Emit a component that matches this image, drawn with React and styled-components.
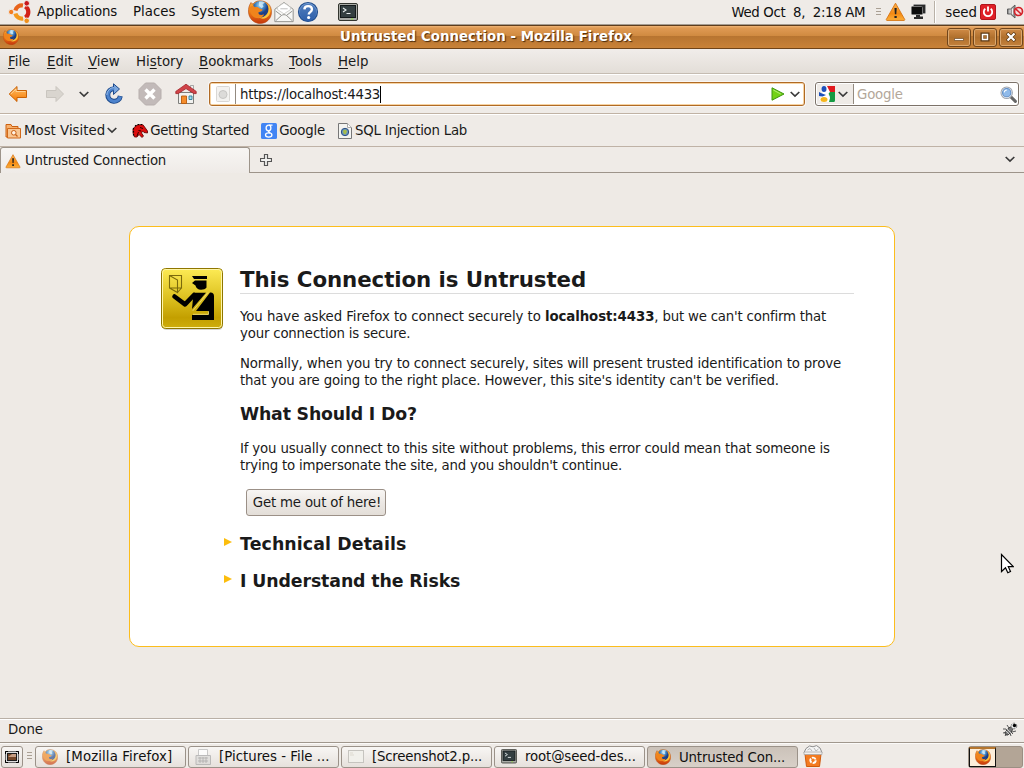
import React from 'react';
import styled, { createGlobalStyle } from 'styled-components';

const Global = createGlobalStyle`
  * { box-sizing: border-box; }
  html, body { margin: 0; padding: 0; overflow: hidden; }
  body { background: #efebe7; }
  h1, h2, p { margin: 0; }
  svg { display: block; flex: none; }
`;

const Desktop = styled.div`
  position: relative;
  width: 1024px;
  height: 768px;
  display: flex;
  flex-direction: column;
  background: #efebe7;
  color: #1a1a1a;
  font-family: "DejaVu Sans", sans-serif;
  font-size: 13.33px;
  line-height: 17px;
  white-space: nowrap;
  overflow: hidden;
`;

const Label = styled.span`
  flex: none;
  width: ${p => (p.$w ? `${p.$w}px` : 'auto')};
  margin-left: ${p => p.$ml || 0}px;
  padding-top: ${p => p.$pt || 0}px;
  letter-spacing: ${p => p.$ls || 0}px;
  color: ${p => p.$color || 'inherit'};
  white-space: pre;
`;

const Icon = styled.svg.attrs(p => ({ width: p.$s, height: p.$h || p.$s, viewBox: p.$vb || '0 0 24 24' }))`
  margin-left: ${p => p.$ml || 0}px;
  opacity: ${p => p.$o || 1};
`;

const TopPanel = styled.header`
  height: 25px;
  flex: none;
  display: flex;
  align-items: center;
  padding: 0 0 1px 8px;
  border-bottom: 1px solid #a49c92;
  color: #101010;
`;
const Spacer = styled.div`flex: 1;`;
const Separator = styled.div`
  width: 2px;
  height: 22px;
  margin-left: 8px;
  border-left: 1px solid #b9b1a7;
  border-right: 1px solid #fff;
`;
const Grip = styled.div`
  width: 5px;
  height: 8px;
  margin-left: ${p => p.$ml}px;
  background: repeating-linear-gradient(#aaa094 0 1px, transparent 1px 3px);
`;

const TitleBar = styled.div`
  height: 24px;
  flex: none;
  display: flex;
  align-items: center;
  padding: 0 1px 0 3px;
  border-top: 1px solid #5f3d1c;
  border-bottom: 1px solid #6f4419;
  background: linear-gradient(#efb578 0, #df9a54 2px, #d08a40 10px, #b77430 10px, #c98238 100%);
`;
const WindowTitle = styled.div`
  flex: 1;
  padding: 0 0 2px 8px;
  text-align: center;
  font-weight: bold;
  color: #fff;
  letter-spacing: 0.05px;
  text-shadow: 1px 1px 1px #4a2b0c;
`;
const WindowButton = styled.div`
  width: 24px;
  height: 19px;
  margin-left: 2px;
  display: flex;
  align-items: center;
  justify-content: center;
  border: 1px solid #70451b;
  border-radius: 3px;
  box-shadow: inset 0 0 0 1px #dba86f;
  background: linear-gradient(#d08b47, #b0702d 50%, #c4813c);
`;

const MenuBar = styled.nav`
  height: 25px;
  flex: none;
  display: flex;
  align-items: center;
  padding: 1px 0 0 8px;
  background: linear-gradient(#f1edea, #e3ded8);
  border-bottom: 1px solid #c5bcb2;
`;
const Key = styled.u`
  text-underline-offset: 2px;
  text-decoration-thickness: 1px;
`;

const NavBar = styled.div`
  height: 40px;
  flex: none;
  display: flex;
  align-items: center;
  padding-left: 8px;
  border-top: 1px solid #fff;
  border-bottom: 1px solid #c0b2a4;
`;
const Field = styled.div`
  width: ${p => p.$w}px;
  height: 24px;
  margin-left: ${p => p.$ml}px;
  display: flex;
  align-items: center;
  background: #fff;
  border: 1px solid ${p => p.$edge};
  border-radius: 3px;
  box-shadow: inset 0 0 0 1px ${p => p.$glow}, 0 0 0 1px #f9f7f5;
  overflow: hidden;
`;
const FieldStart = styled.div`
  width: ${p => p.$w}px;
  height: 20px;
  margin-left: 1px;
  display: flex;
  align-items: center;
  background: ${p => p.$bg || '#fff'};
  border-right: 1px solid #938a80;
`;
const FieldEnd = styled.div`
  padding-right: ${p => p.$pr}px;
  display: flex;
  align-items: center;
`;
const Caret = styled.div`
  width: 1px;
  height: 17px;
  background: #000;
`;

const BookmarkBar = styled.div`
  height: 33px;
  flex: none;
  display: flex;
  align-items: center;
  padding-left: 5px;
  border-top: 1px solid #fff;
  border-bottom: 1px solid #bfb2a6;
`;

const TabStrip = styled.div`
  height: 26px;
  flex: none;
  display: flex;
  background: linear-gradient(#9d948a, #9d948a) bottom / 100% 1px no-repeat;
`;
const Tab = styled.div`
  width: 250px;
  display: flex;
  align-items: center;
  padding-left: 4px;
  border: 1px solid #9d948a;
  border-bottom: 0;
  border-radius: 3px 3px 0 0;
  background: linear-gradient(#f7f5f3, #efebe7);
`;
const TabTools = styled.div`
  flex: 1;
  display: flex;
  align-items: center;
  padding: 0 9px 1px 10px;
`;

const Page = styled.main`
  flex: 1;
  min-height: 0;
  padding: 53px 129px 0;
  background: #eeeae5;
`;
const ErrorCard = styled.section`
  width: 766px;
  height: 421px;
  display: flex;
  padding: 41px 40px 0 31px;
  background: #fff;
  border: 1px solid #fcbd1c;
  border-radius: 10px;
`;
const ErrorText = styled.div`
  flex: none;
  width: 614px;
  margin-left: 16px;
`;
const Heading = styled.h1`
  height: 27px;
  margin-top: -1px;
  font-size: 21.33px;
  line-height: 25px;
  letter-spacing: -0.07px;
  border-bottom: 1px solid #dcdcdc;
`;
const SubHeading = styled.h2`
  position: relative;
  margin-top: ${p => p.$mt}px;
  font-size: 17.33px;
  line-height: 21px;
  letter-spacing: ${p => p.$ls || 0}px;
`;
const Para = styled.p`
  margin-top: ${p => p.$mt}px;
`;
const Line = styled.span`
  display: block;
  letter-spacing: ${p => p.$ls || 0}px;
`;
const Run = styled.span`
  letter-spacing: ${p => p.$ls}px;
`;
const Strong = styled.b`
  letter-spacing: -0.08px;
`;
const EscapeButton = styled.button`
  display: block;
  width: 140px;
  height: 27px;
  margin: 15px 0 0 6px;
  padding: 0 0 0 2px;
  font: inherit;
  color: inherit;
  border: 1px solid #9b9087;
  border-radius: 3px;
  background: linear-gradient(#f8f6f4, #ece8e4 50%, #e3ded8);
  letter-spacing: -0.19px;
`;
const Twisty = styled.i`
  position: absolute;
  left: -16px;
  top: 4px;
  border-left: 8px solid #fcbd0c;
  border-top: 4px solid transparent;
  border-bottom: 4px solid transparent;
`;

const StatusBar = styled.div`
  height: 24px;
  flex: none;
  display: flex;
  align-items: center;
  padding: 0 6px 2px 8px;
  border-top: 1px solid #b9b0a6;
  box-shadow: inset 0 1px #fff;
`;
const TaskBar = styled.footer`
  height: 26px;
  flex: none;
  display: flex;
  align-items: center;
  padding: 0 1px 0 1px;
  border-top: 1px solid #a0978d;
  box-shadow: inset 0 1px #fbfaf9;
  color: #101010;
`;
const Task = styled.div`
  width: ${p => p.$w}px;
  height: 22px;
  margin: 2px 0 0 ${p => p.$ml}px;
  display: flex;
  align-items: center;
  padding-left: ${p => p.$pl}px;
  padding-top: ${p => (p.$active ? 1 : 0)}px;
  border: 1px solid #9b9289;
  border-radius: 3px;
  background: ${p => (p.$active ? 'linear-gradient(#cbc2b9, #d8d0c8)' : 'linear-gradient(#f8f6f4, #e6e1dc)')};
`;
const Pager = styled.div`
  width: 55px;
  height: 22px;
  margin-top: 2px;
  display: flex;
  background: #b3a596;
  border: 1px solid #9b8f83;
  border-radius: 3px;
`;
const Workspace = styled.div`
  width: 27px;
  height: 20px;
  display: flex;
  align-items: center;
  justify-content: center;
  border: 1px solid #111;
  border-top: 2px solid #b5762f;
  background: #fdeeda;
`;
const Pointer = styled.div`
  position: absolute;
  left: 1000px;
  top: 553px;
`;
const Defs = styled.svg`
  position: absolute;
`;

const Gradients = () => (
  <Defs width="0" height="0">
    <defs>
      <radialGradient id="globe" cx=".45" cy=".25"><stop offset="0" stopColor="#b4def2" /><stop offset=".5" stopColor="#4a90cc" /><stop offset="1" stopColor="#1c3f86" /></radialGradient>
      <linearGradient id="fox" x1="0" y1="0" x2="0" y2="1"><stop offset="0" stopColor="#f9ae33" /><stop offset=".5" stopColor="#ee7a17" /><stop offset="1" stopColor="#c5360c" /></linearGradient>
      <linearGradient id="warn" x1="0" y1="0" x2="0" y2="1"><stop offset="0" stopColor="#fdb251" /><stop offset=".6" stopColor="#f58a12" /><stop offset="1" stopColor="#fbb03c" /></linearGradient>
      <linearGradient id="gold" x1="0" y1="0" x2="0" y2="1"><stop offset="0" stopColor="#fdeb55" /><stop offset=".5" stopColor="#dcc01f" /><stop offset=".82" stopColor="#c39f00" /><stop offset="1" stopColor="#cfae0c" /></linearGradient>
      <linearGradient id="orange" x1="0" y1="0" x2="0" y2="1"><stop offset="0" stopColor="#ffc06b" /><stop offset="1" stopColor="#f57900" /></linearGradient>
      <linearGradient id="blue" x1="0" y1="0" x2="0" y2="1"><stop offset="0" stopColor="#8db4e4" /><stop offset="1" stopColor="#2a5fb0" /></linearGradient>
    </defs>
  </Defs>
);

const Firefox = p => (
  <Icon {...p}>
    <path d="M3 2.500C1 5.500.3 8.500.5 12 .8 18.500 6 23.500 12.200 23.500c6.300 0 11.300-5 11.300-11.300 0-3.200-1-6.200-3-8.200C18 1.800 15 .8 12 .8 9 .8 6.500 2 5 4 4 3.800 3.400 3.300 3 2.500z" fill="url(#fox)" stroke="#b5480f" strokeWidth=".6" />
    <path d="M5.500 4.500C7.500 1.800 10 1 12.500 1c4 0 7.500 3 8 7.500.3 5-3 8.800-7.500 9-4.500 0-7.500-3-8-7z" fill="url(#globe)" />
    <path d="M11 1.800c2-.6 4.500-.2 6 1l-2.500 1.400 1 2.500-2 1.600-2.500-2.500z" fill="#d4edf7" opacity=".8" />
    <path d="M2 7.500C3.500 5.500 5.500 5.500 7 7.200c2-.5 3.500 0 4.500 1.300l3 1c0 1.600-2 2.200-4 2.800-.4 2.700 2.500 3.500 5.500 2-.6 3-4 4.300-7.500 3.700C4 17.500 1.500 13 2 7.500z" fill="#f0841c" />
    <path d="M19.500 3.800c1.700 3.200 1.800 7.200-.5 10.200-2 2.700-5 3.800-8 3.600 3.500 2.200 8 1 10.200-2.600 2.200-3.800 1.600-8.600-1.700-11.200z" fill="#fcc43c" />
  </Icon>
);

const Warning = p => (
  <Icon {...p}>
    <path d="M12 2.500 22.500 21a.8.8 0 0 1-.7 1.200H2.200A.8.8 0 0 1 1.500 21z" fill="url(#warn)" stroke="#d5710d" strokeWidth="1" strokeLinejoin="round" />
    <path d="M10.800 8h2.600l-.5 7h-1.600zM10.800 17h2.600v2.400h-2.600z" fill="#222" />
  </Icon>
);

const Ubuntu = () => (
  <Icon $s={24}>
    <g fill="none" strokeWidth="4.200">
      <path d="M7.400 10.500A6.600 6.600 0 0 1 15 5.500" stroke="#e8641b" />
      <path d="M17.300 6.500A6.600 6.600 0 0 1 17.300 17.600" stroke="#d32219" />
      <path d="M15.200 18.500A6.600 6.600 0 0 1 7.400 13.500" stroke="#f39a1c" />
    </g>
    <g stroke="#efebe7" strokeWidth="1">
      <circle cx="3.200" cy="12" r="2.700" fill="#f47d20" />
      <circle cx="18.700" cy="3.300" r="2.800" fill="#c8171d" />
      <circle cx="18.700" cy="20.800" r="2.800" fill="#f0901c" />
    </g>
  </Icon>
);

const Mail = () => (
  <Icon $s={22} $ml={1}>
    <path d="M2 9 12 1.500 22 9v13.500H2z" fill="#f7f7f5" stroke="#8b8b88" />
    <path d="M5 9.500V6.800l7-4.800 7 4.800v2.700L12 14z" fill="#fff" stroke="#c2c2bf" strokeWidth=".8" />
    <path d="m3 11 6 4.500M21 11l-6 4.500M3 21.500 9 16c2-1.500 4-1.500 6 0l6 5.500" fill="none" stroke="#8b8b88" />
    <path d="M8 8.500h8" stroke="#bbb" />
  </Icon>
);

const Help = () => (
  <Icon $s={22} $ml={2}>
    <circle cx="12" cy="12" r="10.400" fill="url(#blue)" stroke="#24508f" strokeWidth="1.200" />
    <circle cx="12" cy="12" r="9" fill="#2f5da5" opacity=".6" />
    <path d="M8 9.200C8.200 6.700 9.800 5.600 12.100 5.600c2.600 0 4.200 1.500 4.200 3.500 0 3-3.500 3-3.500 5.600" fill="none" stroke="#fff" strokeWidth="2.600" />
    <circle cx="12.700" cy="18" r="1.700" fill="#fff" />
  </Icon>
);

const Terminal = p => (
  <Icon $vb="0 0 20 18" $h={p.$s * 0.9} {...p}>
    <rect x=".5" y=".5" width="19" height="17" rx="1.500" fill="#a9aba6" stroke="#33352f" />
    <rect x="2.500" y="2.500" width="15" height="12" fill="#343f41" stroke="#141a1b" />
    <path d="m5 5 3 2-3 2M8.500 10.500h4" fill="none" stroke="#e9efef" strokeWidth="1.100" />
    <path d="M13 16h2" stroke="#8ae234" />
  </Icon>
);

const Network = () => (
  <Icon $s={16} $ml={4} $vb="0 0 16 16">
    <rect x="3.500" y=".5" width="12" height="9" rx="1" fill="#2a2a2a" stroke="#9a9a9a" />
    <rect x="1.500" y="2.500" width="11" height="8" rx="1" fill="#0c0c0c" stroke="#777" />
    <path d="M6 11h4v1.500h3v2.500H4v-2h2z" fill="#2b2b2b" />
  </Icon>
);

const Power = () => (
  <Icon $s={16} $ml={3} $vb="0 0 16 16">
    <rect x=".5" y=".5" width="15" height="15" rx="1.500" fill="#df1f26" stroke="#b0151b" />
    <path d="M5.300 4.800a4.200 4.200 0 1 0 5.400 0M8 2.500v5" fill="none" stroke="#fff" strokeWidth="1.800" />
  </Icon>
);

const Muted = () => (
  <Icon $s={17} $ml={11} $vb="0 0 17 16">
    <path d="M.5 5.500h3L8 1.500v13L3.500 10.500h-3z" fill="#999" stroke="#555" strokeWidth=".9" />
    <path d="M3 6v4M5.500 5v6" stroke="#eee" strokeWidth="1" />
    <circle cx="11.500" cy="8" r="4" fill="#f7dada" stroke="#d3222a" strokeWidth="1.700" />
    <path d="m8.800 5.500 5.300 5" stroke="#d3222a" strokeWidth="1.700" />
  </Icon>
);

const Chevron = p => (
  <Icon $s={10} $h={7} $vb="0 0 10 7" {...p}>
    <path d="M.7 1 5 5 9.300 1" fill="none" stroke="#3a3a3a" strokeWidth="1.700" />
  </Icon>
);

const Arrow = ({ dim, ...p }) => (
  <Icon $s={20} $vb="0 0 20 20" {...p}>
    <path d={dim ? 'M18.500 10 11 2.500v4H1.500v7H11v4z' : 'M1.200 10 9 2.500v4h9.500v7H9v4z'} fill={dim ? '#d9d5cf' : 'url(#orange)'} stroke={dim ? '#c9c5bf' : '#c96104'} strokeLinejoin="round" />
    {!dim && <path d="m2.800 10 5.200-5v2.500h9.500" fill="none" stroke="#ffd9a2" strokeWidth=".8" />}
  </Icon>
);

const Reload = () => (
  <Icon $s={22} $ml={14} $vb="0 0 22 22">
    <g fill="none" strokeLinejoin="round">
      <path d="M11 5.700A6.300 6.300 0 1 0 17.300 13" stroke="#1d4a8c" strokeWidth="5" />
      <path d="M10.500.8 16.500 6 10.500 11.500z" fill="#7ba6dd" stroke="#1d4a8c" />
      <path d="M11.200 5.700A6.300 6.300 0 1 0 17.300 13.500" stroke="#4d83cd" strokeWidth="3.200" />
      <path d="M11 4.600A7.400 7.400 0 0 0 3.800 12" stroke="#9dbfe9" strokeWidth=".9" />
    </g>
  </Icon>
);

const Stop = () => (
  <Icon $s={24} $ml={13}>
    <path d="M7.500 1h9L23 7.500v9L16.500 23h-9L1 16.500v-9z" fill="#c2bab9" stroke="#b7afad" />
    <path d="m7.500 7.500 9 9m0-9-9 9" stroke="#fff" strokeWidth="3.400" />
  </Icon>
);

const Home = () => (
  <Icon $s={22} $ml={13} $vb="0 0 22 22">
    <path d="M15.500 2.500h3v6h-3z" fill="#eee" stroke="#888" strokeWidth=".7" />
    <path d="M3.500 9.500h15v11h-15z" fill="#f1f1ef" stroke="#7e7e7b" />
    <path d="M6.500 13h5v7.500h-5z" fill="#f58c2b" stroke="#b85a0c" strokeWidth=".9" />
    <path d="M14 13h3v3.500h-3z" fill="#9fe0ee" stroke="#2c7b99" strokeWidth=".9" />
    <path d="M11 1.200.8 8.400v2.200h2.400L11 5.600l7.800 5h2.400V8.400z" fill="#d04348" stroke="#a11f25" strokeWidth=".8" />
  </Icon>
);

const BlankPage = () => (
  <Icon $s={16} $ml={4} $vb="0 0 16 16">
    <rect x="1.500" y=".5" width="13" height="15" rx="1" fill="#f3f2f0" stroke="#d9d7d4" />
    <circle cx="8" cy="8.500" r="4" fill="#dcdbd9" stroke="#c7c6c4" />
  </Icon>
);

const Go = () => (
  <Icon $s={14} $vb="0 0 14 14">
    <path d="M1 .8 13 7 1 13.200z" fill="#73d216" stroke="#3f9610" strokeLinejoin="round" />
    <path d="m2.300 3 7.500 4" stroke="#b5ee76" />
  </Icon>
);

const GoogleG = () => (
  <Icon $s={16} $ml={2} $vb="0 0 16 16">
    <path d="M7 0h9v6H9z" fill="#e11a1f" />
    <path d="M9 6h7v8.500q0 1.500-1.500 1.500H9l2-5z" fill="#159a43" />
    <path d="M3 0h5l3 6-2 2 2 4-1 4H2L0 13l4-4-2-5z" fill="#fff" />
    <ellipse cx="5" cy="3" rx="2.500" ry="3" fill="#1f51b9" />
    <path d="M0 6 3 7.500 7 9 3.500 10.500 0 10z" fill="#1f51b9" />
    <ellipse cx="5" cy="13.500" rx="3.500" ry="2.500" fill="#f5b51c" />
  </Icon>
);

const Magnifier = () => (
  <Icon $s={17} $vb="0 0 16 16">
    <path d="m10 10 4.500 4.500" stroke="#666" strokeWidth="2.800" strokeLinecap="round" />
    <circle cx="6.300" cy="6.300" r="5.400" fill="#e8edf4" stroke="#a3a8b0" />
    <circle cx="6.300" cy="6.300" r="3.900" fill="#8fbaea" stroke="#5f8dc6" />
    <path d="M4 6a2.500 2.500 0 0 1 2.500-2.300" stroke="#fff" fill="none" />
  </Icon>
);

const SmartFolder = () => (
  <Icon $s={16} $vb="0 0 16 16">
    <path d="M1 1.500h5l1 2h6v3H3v7.500H1z" fill="#f7b06d" stroke="#cc6010" />
    <path d="M2.500 5.500h13v9.500h-13z" fill="#f9c692" stroke="#d0691b" />
    <circle cx="8.800" cy="9.800" r="2.300" fill="#fff2e4" stroke="#c65d12" />
    <path d="m10.500 11.500 2 2" stroke="#c65d12" strokeWidth="1.300" />
  </Icon>
);

const RedDragon = () => (
  <Icon $s={16} $ml={15} $h={14} $vb="0 0 16 14">
    <path d="M3 2.500 6 .8h5l2 2.700 2.500 3.500v2L12 8.500 10.500 7l-1 2 2 3-1.500 1.500-3-3-2 2.500H2.500L1 9V5z" fill="#dd0d0d" stroke="#500" strokeWidth=".8" />
    <path d="M1.500 4v8M3 2l3-1.500h4" stroke="#000" strokeWidth="1.200" strokeDasharray="1.500 1.500" fill="none" />
    <path d="m8 3.500 3 1M6.500 6.500 9 7M5 12l1.500-4" stroke="#300" fill="none" />
  </Icon>
);

const GoogleBlue = () => (
  <Icon $s={16} $ml={12} $vb="0 0 16 16">
    <rect width="16" height="16" rx="1.500" fill="#4285f4" />
    <g fill="none" stroke="#fff" strokeWidth="1.300">
      <ellipse cx="7.500" cy="5" rx="2.400" ry="2.800" />
      <path d="M8 2.200h3.500M8.500 7.700c-2 1-.5 1.500.7 2.300" />
      <ellipse cx="7.700" cy="12" rx="3.200" ry="2.100" />
    </g>
  </Icon>
);

const PageGlobe = () => (
  <Icon $s={14} $h={16} $ml={13} $vb="0 0 14 16">
    <path d="M.5.500h9l4 4v11H.5z" fill="#f4f4f1" stroke="#777" />
    <path d="M9.500.500v4h4" fill="#fff" stroke="#aaa" />
    <circle cx="7" cy="9" r="3.700" fill="#6a97bd" stroke="#2c4f86" />
    <path d="M5 7.500 8 6.500l1 2-1.500 3-2-1z" fill="#a8bd4a" />
  </Icon>
);

const Plus = () => (
  <Icon $s={12} $vb="0 0 12 12">
    <path d="M4.500.500h3v4h4v3h-4v4h-3v-4h-4v-3h4z" fill="#f2f2f0" stroke="#555" strokeWidth="1.200" />
  </Icon>
);

const Officer = () => (
  <Icon $s={63} $vb="0 0 63 63">
    <rect x="1.500" y="2" width="60" height="60" rx="4" fill="#aaa" opacity=".5" />
    <rect x=".5" y=".5" width="61" height="60" rx="4" fill="url(#gold)" stroke="#8f7600" />
    <rect x="1.500" y="1.500" width="59" height="58" rx="3" fill="none" stroke="#fff6a8" />
    <path d="M8.500 7.500h12v12.500h-12zM8.500 7.500 16.500 12v12.500L8.500 20M16.500 24.500l4-4.500" fill="none" stroke="#7b6a0c" strokeWidth="1.100" />
    <path d="M31 8h15v3H33zM34 12.500h11.500v7c-1 1.500-3 2.200-5.500 2.200-3 0-5-1.700-5.500-4.200L31 15z" fill="#000" />
    <path d="M13.500 28.500 24 36.300 33 27" fill="none" stroke="#000" strokeWidth="4.600" strokeLinecap="round" strokeLinejoin="round" />
    <path d="M32.500 24.800h12.500L31 41z" fill="#000" />
    <path d="M49 24.500c2.500-.3 4 1 4 3.500v24H31v-5h16.500V43H35z" fill="#000" />
    <path d="M47 24.500 31.800 42.800M32 46.300h15.500v-3" fill="none" stroke="#f1e28a" strokeWidth=".8" />
  </Icon>
);

const ShowDesktop = () => (
  <Icon $s={14} $h={12} $vb="0 0 14 12">
    <rect x=".5" y=".5" width="13" height="11" fill="#ddd" stroke="#666" />
    <path d="M.5 3V.5H3M11 .5h2.500V3M13.500 9v2.500H11M3 11.500H.5V9" fill="none" stroke="#000" />
    <rect x="2.500" y="2.500" width="9" height="7" fill="#744628" stroke="#1d1d1d" />
    <path d="M3 6 7 3h4v3z" fill="#c79e83" />
  </Icon>
);

const Cabinet = () => (
  <Icon $s={16} $vb="0 0 16 16" $o={0.75}>
    <path d="M3.500.5h9v7h-9z" fill="#fff" stroke="#bbb" />
    <path d="M1 6.500h14.500v9H1z" fill="#dcdbd9" stroke="#aaa" />
    <path d="M3 9h10M3 12h10M5 8v6M8 8v6M11 8v6" stroke="#999" strokeWidth=".8" />
  </Icon>
);

const Thumbnail = () => (
  <Icon $s={16} $h={13} $vb="0 0 16 13">
    <rect x=".5" y=".5" width="15" height="12" fill="#f1f0eb" stroke="#c6c4bf" />
    <path d="M2 3h3M2 5h4" stroke="#ddd9cf" />
  </Icon>
);

const Bug = () => (
  <Icon $s={16} $vb="0 0 16 16">
    <path d="M1 7h3l2 3M5 3l2 3M9 14l-1-3M3 14l2-3M14 9l-4 1M1 11l4-1M11 12l-2-2" stroke="#555" fill="none" />
    <ellipse cx="7" cy="9" rx="2.300" ry="5" transform="rotate(40 7 9)" fill="#777" stroke="#333" strokeWidth=".8" />
    <path d="m5 7 4 4M4 9l3 3" stroke="#ccc" />
    <circle cx="12" cy="4" r="2.800" fill="#ececec" stroke="#777" strokeDasharray="2 1" />
    <circle cx="12.500" cy="3.500" r="1.700" fill="#000" />
  </Icon>
);

const Trash = () => (
  <Icon $s={20} $h={22} $ml={5} $vb="0 0 20 22">
    <path d="M1 7.500 3 3.500 6.500 1l3.500.8L13.500.6 17 3l2 4.500z" fill="#f4f4f4" stroke="#8d8d8d" strokeLinejoin="round" />
    <path d="m4.500 5 2.500-1.500L9 6M11 3l2 3 2.500-2" stroke="#b5b5b5" fill="none" />
    <path d="M2 9h16l-1.500 12.500h-13z" fill="#f37b20" stroke="#cf5a0c" />
    <path d="M1 7h18v2.500H1z" fill="#f3f1ef" stroke="#aaa" strokeWidth=".8" />
    <circle cx="10" cy="15.300" r="2.700" fill="none" stroke="#fff" strokeWidth="1.900" strokeDasharray="4.500 1.150" />
  </Icon>
);

export default function App() {
  return (
    <Desktop>
      <Global />
      <Gradients />
      <TopPanel>
        <Ubuntu />
        <Label $ml={5} $w={96} $ls={-0.1}>Applications</Label>
        <Label $w={58}>Places</Label>
        <Label $w={57} $ls={-0.1}>System</Label>
        <Firefox $s={24} />
        <Mail />
        <Help />
        <Terminal $s={20} $ml={19} />
        <Spacer />
        <Label $pt={2} $ls={-0.35}>Wed Oct  8,  2:18 AM</Label>
        <Grip $ml={11} />
        <Warning $s={21} $ml={4} />
        <Network />
        <Separator />
        <Label $pt={2} $ml={9}>seed</Label>
        <Power />
        <Muted />
      </TopPanel>

      <TitleBar>
        <Firefox $s={16} />
        <WindowTitle>Untrusted Connection - Mozilla Firefox</WindowTitle>
        <WindowButton><Icon $s={10} $vb="0 0 10 10"><path d="M.5 6.500h9v2h-9z" fill="#fff" stroke="#5c3813" strokeWidth=".6" /></Icon></WindowButton>
        <WindowButton><Icon $s={10} $vb="0 0 10 10"><path d="M2 2h6v6H2z" fill="none" stroke="#5c3813" strokeWidth="3" /><path d="M2.500 2.500h5v5h-5z" fill="none" stroke="#fff" strokeWidth="1.500" /></Icon></WindowButton>
        <WindowButton><Icon $s={10} $vb="0 0 10 10"><path d="m1 1 8 8m0-8L1 9" stroke="#5c3813" strokeWidth="3.400" /><path d="m1.500 1.500 7 7m0-7-7 7" stroke="#fff" strokeWidth="2.200" /></Icon></WindowButton>
      </TitleBar>

      <MenuBar>
        <Label $w={39}><Key>F</Key>ile</Label>
        <Label $w={41}><Key>E</Key>dit</Label>
        <Label $w={48}><Key>V</Key>iew</Label>
        <Label $w={63}>Hi<Key>s</Key>tory</Label>
        <Label $w={90}><Key>B</Key>ookmarks</Label>
        <Label $w={49}><Key>T</Key>ools</Label>
        <Label><Key>H</Key>elp</Label>
      </MenuBar>

      <NavBar>
        <Arrow />
        <Arrow dim $ml={17} />
        <Chevron $ml={14} />
        <Reload />
        <Stop />
        <Home />
        <Field $w={596} $ml={12} $edge="#b06a24" $glow="#f6d3a3">
          <FieldStart $w={25}><BlankPage /></FieldStart>
          <Label $ml={4} $ls={-0.27}>https://localhost:4433</Label>
          <Caret />
          <Spacer />
          <FieldEnd $pr={4}><Go /><Chevron $ml={5} /></FieldEnd>
        </Field>
        <Field $w={204} $ml={10} $edge="#7c7269" $glow="#fff">
          <FieldStart $w={37} $bg="#efebe7"><GoogleG /><Chevron $ml={3} /></FieldStart>
          <Label $ml={3} $ls={-0.2} $color="#b3a79a">Google</Label>
          <Spacer />
          <FieldEnd $pr={1}><Magnifier /></FieldEnd>
        </Field>
      </NavBar>

      <BookmarkBar>
        <SmartFolder />
        <Label $ml={3}>Most Visited</Label>
        <Chevron $ml={2} />
        <RedDragon />
        <Label $ml={2} $ls={-0.27}>Getting Started</Label>
        <GoogleBlue />
        <Label $ml={2} $ls={-0.17}>Google</Label>
        <PageGlobe />
        <Label $ml={3} $ls={-0.24}>SQL Injection Lab</Label>
      </BookmarkBar>

      <TabStrip>
        <Tab>
          <Warning $s={16} />
          <Label $ml={4} $ls={-0.24}>Untrusted Connection</Label>
        </Tab>
        <TabTools>
          <Plus />
          <Spacer />
          <Chevron />
        </TabTools>
      </TabStrip>

      <Page>
        <ErrorCard>
          <Officer />
          <ErrorText>
            <Heading>This Connection is Untrusted</Heading>
            <Para $mt={14}>
              <Line><Run $ls={-0.078}>You have asked Firefox to connect securely to </Run><Strong>localhost:4433</Strong><Run $ls={-0.2}>, but we can't confirm that</Run></Line>
              <Line $ls={-0.19}>your connection is secure.</Line>
            </Para>
            <Para $mt={13}>
              <Line $ls={-0.149}>Normally, when you try to connect securely, sites will present trusted identification to prove</Line>
              <Line $ls={-0.165}>that you are going to the right place. However, this site's identity can't be verified.</Line>
            </Para>
            <SubHeading $mt={15} $ls={-0.17}>What Should I Do?</SubHeading>
            <Para $mt={15}>
              <Line $ls={-0.162}>If you usually connect to this site without problems, this error could mean that someone is</Line>
              <Line $ls={-0.2}>trying to impersonate the site, and you shouldn't continue.</Line>
            </Para>
            <EscapeButton>Get me out of here!</EscapeButton>
            <SubHeading $mt={18} $ls={0.12}><Twisty />Technical Details</SubHeading>
            <SubHeading $mt={16} $ls={-0.1}><Twisty />I Understand the Risks</SubHeading>
          </ErrorText>
        </ErrorCard>
      </Page>

      <StatusBar>
        <Label>Done</Label>
        <Spacer />
        <Bug />
      </StatusBar>

      <TaskBar>
        <Task $w={22} $ml={0} $pl={3}><ShowDesktop /></Task>
        <Grip $ml={4} />
        <Task $w={151} $ml={3} $pl={6}><Firefox $s={16} $o={0.65} /><Label $ml={8} $ls={0.1}>[Mozilla Firefox]</Label></Task>
        <Task $w={151} $ml={2} $pl={6}><Cabinet /><Label $ml={8}>[Pictures - File ...</Label></Task>
        <Task $w={151} $ml={2} $pl={6}><Thumbnail /><Label $ml={8} $ls={-0.22}>[Screenshot2.p...</Label></Task>
        <Task $w={151} $ml={2} $pl={6}><Terminal $s={16} /><Label $ml={8} $ls={-0.14}>root@seed-des...</Label></Task>
        <Task $w={151} $ml={2} $pl={7} $active><Firefox $s={16} /><Label $ml={8} $pt={1} $ls={-0.18}>Untrusted Con...</Label></Task>
        <Trash />
        <Spacer />
        <Pager><Workspace><Firefox $s={16} /></Workspace></Pager>
      </TaskBar>

      <Pointer>
        <Icon $s={14} $h={21} $vb="0 0 14 21">
          <path d="M1.500 1.500v17l4-3.800 2.300 5 2.700-1.200-2.200-4.800h5z" fill="#fff" stroke="#000" strokeWidth="1.200" />
        </Icon>
      </Pointer>
    </Desktop>
  );
}
